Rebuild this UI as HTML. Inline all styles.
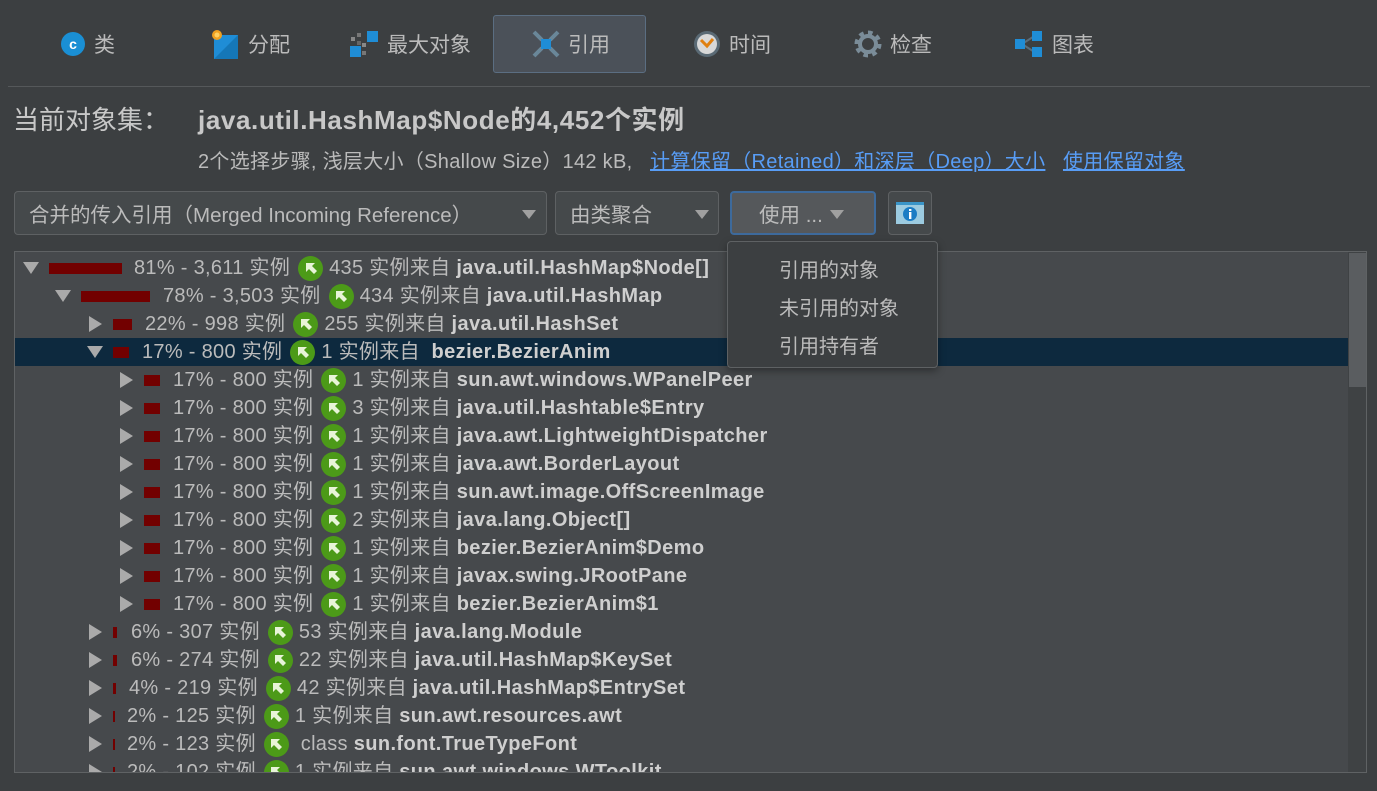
<!DOCTYPE html>
<html><head><meta charset="utf-8"><style>
*{margin:0;padding:0;box-sizing:border-box}
body{width:1377px;height:791px;background:#3c3f41;color:#bbbbbb;font-family:"Liberation Sans","Noto Sans CJK SC",sans-serif;position:relative;overflow:hidden;font-size:18px}
.abs{position:absolute}
.tab{position:absolute;top:15px;height:58px;display:flex;align-items:center;font-size:21px;color:#bbb}
.tab svg{margin-right:8px}
.sel{background:#4b5159;border:1px solid #5b6e82;border-radius:3px}
a{color:#589df6;text-decoration:underline}
.combo{position:absolute;top:191px;height:44px;background:#45494b;border:1px solid #5e6163;border-radius:4px;display:flex;align-items:center;padding-left:14px;font-size:20.5px;white-space:nowrap}
.tri{position:absolute;width:0;height:0;border-left:7px solid transparent;border-right:7px solid transparent;border-top:9px solid #a0a0a0}
.tree{position:absolute;left:14px;top:251px;width:1353px;height:522px;background:#46494c;border:1px solid #5f6264;overflow:hidden}
.row{position:absolute;left:0;width:1333px;height:28px;white-space:nowrap}
.row.s{background:#0d293e}
.ar{position:absolute;top:8px}
.ar.o{width:0;height:0;border-left:8px solid transparent;border-right:8px solid transparent;border-top:12px solid #aaa}
.ar.c{width:0;height:0;border-top:8px solid transparent;border-bottom:8px solid transparent;border-left:13px solid #aaa;top:6px}
.bar{position:absolute;top:9px;height:11px;background:#720000}
.tx{position:absolute;top:1px;display:flex;align-items:center;line-height:26px;font-size:20px;letter-spacing:0.3px}
.gi{width:25px;height:25px;border-radius:50%;background:#4c9a18;margin:0 6px 0 8px;display:inline-flex;align-items:center;justify-content:center}
b{color:#cfcfcf;letter-spacing:0.4px}
</style></head><body>
<div class="tab" style="left:60px"><svg width="26" height="26"><circle cx="13" cy="13" r="12" fill="#1a8fd4"/><text x="13" y="18" font-size="14" font-weight="bold" fill="#fff" text-anchor="middle" font-family="Liberation Sans">c</text></svg>类</div>
<div class="tab" style="left:210px"><svg width="30" height="30"><rect x="4" y="6" width="24" height="24" fill="#1f8dd6"/><path d="M4 30 L28 6 L28 30Z" fill="#1577b8"/><circle cx="7" cy="6" r="5" fill="#f0a020"/><circle cx="7" cy="6" r="2.5" fill="#ffd060"/></svg>分配</div>
<div class="tab" style="left:349px"><svg width="30" height="30"><rect x="18" y="2" width="11" height="11" fill="#1f8dd6"/><rect x="1" y="17" width="11" height="11" fill="#1f8dd6"/><rect x="2" y="8" width="4" height="4" fill="#888"/><rect x="8" y="4" width="4" height="4" fill="#777"/><rect x="13" y="14" width="4" height="4" fill="#888"/><rect x="13" y="22" width="4" height="4" fill="#777"/><rect x="8" y="12" width="4" height="4" fill="#666"/></svg>最大对象</div>
<div class="tab sel" style="left:493px;width:153px;padding-left:38px"><svg width="28" height="28"><path d="M2 2 L10 10 M26 2 L18 10 M2 26 L10 18 M26 26 L18 18" stroke="#6a8799" stroke-width="4"/><rect x="9" y="9" width="10" height="10" fill="#1f8dd6"/></svg>引用</div>
<div class="tab" style="left:693px"><svg width="28" height="28"><circle cx="14" cy="14" r="13" fill="#5a6a75"/><circle cx="14" cy="14" r="10" fill="#d8d8d8"/><path d="M8 10 L14 16 L20 9" stroke="#e08010" stroke-width="3" fill="none"/></svg>时间</div>
<div class="tab" style="left:854px"><svg width="28" height="28"><circle cx="14" cy="14" r="10" fill="none" stroke="#7a8c98" stroke-width="7" stroke-dasharray="4 3.8"/><circle cx="14" cy="14" r="8" fill="none" stroke="#7a8c98" stroke-width="4"/></svg>检查</div>
<div class="tab" style="left:1014px"><svg width="30" height="28"><path d="M8 14 L22 5 M8 14 L22 23" stroke="#5b6d7a" stroke-width="2"/><rect x="1" y="9" width="10" height="10" fill="#1f8dd6"/><rect x="18" y="1" width="10" height="10" fill="#1f8dd6"/><rect x="18" y="17" width="10" height="10" fill="#1f8dd6"/></svg>图表</div>
<div class="abs" style="left:8px;top:86px;width:1362px;height:1px;background:#55585a"></div>
<div class="abs" style="left:13px;top:100px;font-size:26px;color:#c8c8c8">当前对象集：</div>
<div class="abs" style="left:198px;top:100px;font-size:26px;font-weight:bold;color:#c8c8c8;letter-spacing:0.6px">java.util.HashMap$Node的4,452个实例</div>
<div class="abs" style="left:198px;top:145px;font-size:20px;letter-spacing:0.3px;white-space:nowrap">2个选择步骤, 浅层大小（Shallow Size）142 kB,&nbsp;&nbsp; <a>计算保留（Retained）和深层（Deep）大小</a>&nbsp;&nbsp; <a>使用保留对象</a></div>
<div class="combo" style="left:14px;width:533px">合并的传入引用（Merged Incoming Reference）<div class="tri" style="left:507px;top:18px"></div></div>
<div class="combo" style="left:555px;width:164px">由类聚合<div class="tri" style="left:139px;top:18px"></div></div>
<div class="combo" style="left:730px;width:146px;background:#55585b;border:2px solid #3d6a9c;padding-left:27px">使用 ...<div class="tri" style="left:98px;top:17px"></div></div>
<div class="combo" style="left:888px;width:44px;padding:0;justify-content:center"><svg width="30" height="24"><rect x="1" y="1" width="28" height="22" fill="#9ccbe0"/><rect x="1" y="1" width="28" height="3" fill="#3a95c8"/><circle cx="15" cy="13" r="7" fill="#1a7cc4"/><rect x="14" y="11" width="2.4" height="7" fill="#fff"/><rect x="14" y="8" width="2.4" height="2" fill="#fff"/></svg></div>
<div class="tree">
<div class="abs" style="left:1333px;top:0;width:19px;height:520px;background:#3f4244"></div>
<div class="abs" style="left:1334px;top:1px;width:17px;height:134px;background:#5a5d60"></div>
<div class="row" style="top:2px"><div class="ar o" style="left:8px"></div><div class="bar" style="left:34px;width:73px"></div><div class="tx" style="left:119px">81% - 3,611 实例<span class="gi"><svg width="14" height="14"><path d="M2 2 L11 2 L8 5 L13 10 L10 13 L5 8 L2 11Z" fill="#e8f4d8"/></svg></span>435 实例来自&nbsp;<b>java.util.HashMap$Node[]</b></div></div>
<div class="row" style="top:30px"><div class="ar o" style="left:40px"></div><div class="bar" style="left:66px;width:69px"></div><div class="tx" style="left:148px">78% - 3,503 实例<span class="gi"><svg width="14" height="14"><path d="M2 2 L11 2 L8 5 L13 10 L10 13 L5 8 L2 11Z" fill="#e8f4d8"/></svg></span>434 实例来自&nbsp;<b>java.util.HashMap</b></div></div>
<div class="row" style="top:58px"><div class="ar c" style="left:74px"></div><div class="bar" style="left:98px;width:19px"></div><div class="tx" style="left:130px">22% - 998 实例<span class="gi"><svg width="14" height="14"><path d="M2 2 L11 2 L8 5 L13 10 L10 13 L5 8 L2 11Z" fill="#e8f4d8"/></svg></span>255 实例来自&nbsp;<b>java.util.HashSet</b></div></div>
<div class="row s" style="top:86px"><div class="ar o" style="left:72px"></div><div class="bar" style="left:98px;width:16px"></div><div class="tx" style="left:127px">17% - 800 实例<span class="gi"><svg width="14" height="14"><path d="M2 2 L11 2 L8 5 L13 10 L10 13 L5 8 L2 11Z" fill="#e8f4d8"/></svg></span>1 实例来自&nbsp;&nbsp;<b>bezier.BezierAnim</b></div></div>
<div class="row" style="top:114px"><div class="ar c" style="left:105px"></div><div class="bar" style="left:129px;width:16px"></div><div class="tx" style="left:158px">17% - 800 实例<span class="gi"><svg width="14" height="14"><path d="M2 2 L11 2 L8 5 L13 10 L10 13 L5 8 L2 11Z" fill="#e8f4d8"/></svg></span>1 实例来自&nbsp;<b>sun.awt.windows.WPanelPeer</b></div></div>
<div class="row" style="top:142px"><div class="ar c" style="left:105px"></div><div class="bar" style="left:129px;width:16px"></div><div class="tx" style="left:158px">17% - 800 实例<span class="gi"><svg width="14" height="14"><path d="M2 2 L11 2 L8 5 L13 10 L10 13 L5 8 L2 11Z" fill="#e8f4d8"/></svg></span>3 实例来自&nbsp;<b>java.util.Hashtable$Entry</b></div></div>
<div class="row" style="top:170px"><div class="ar c" style="left:105px"></div><div class="bar" style="left:129px;width:16px"></div><div class="tx" style="left:158px">17% - 800 实例<span class="gi"><svg width="14" height="14"><path d="M2 2 L11 2 L8 5 L13 10 L10 13 L5 8 L2 11Z" fill="#e8f4d8"/></svg></span>1 实例来自&nbsp;<b>java.awt.LightweightDispatcher</b></div></div>
<div class="row" style="top:198px"><div class="ar c" style="left:105px"></div><div class="bar" style="left:129px;width:16px"></div><div class="tx" style="left:158px">17% - 800 实例<span class="gi"><svg width="14" height="14"><path d="M2 2 L11 2 L8 5 L13 10 L10 13 L5 8 L2 11Z" fill="#e8f4d8"/></svg></span>1 实例来自&nbsp;<b>java.awt.BorderLayout</b></div></div>
<div class="row" style="top:226px"><div class="ar c" style="left:105px"></div><div class="bar" style="left:129px;width:16px"></div><div class="tx" style="left:158px">17% - 800 实例<span class="gi"><svg width="14" height="14"><path d="M2 2 L11 2 L8 5 L13 10 L10 13 L5 8 L2 11Z" fill="#e8f4d8"/></svg></span>1 实例来自&nbsp;<b>sun.awt.image.OffScreenImage</b></div></div>
<div class="row" style="top:254px"><div class="ar c" style="left:105px"></div><div class="bar" style="left:129px;width:16px"></div><div class="tx" style="left:158px">17% - 800 实例<span class="gi"><svg width="14" height="14"><path d="M2 2 L11 2 L8 5 L13 10 L10 13 L5 8 L2 11Z" fill="#e8f4d8"/></svg></span>2 实例来自&nbsp;<b>java.lang.Object[]</b></div></div>
<div class="row" style="top:282px"><div class="ar c" style="left:105px"></div><div class="bar" style="left:129px;width:16px"></div><div class="tx" style="left:158px">17% - 800 实例<span class="gi"><svg width="14" height="14"><path d="M2 2 L11 2 L8 5 L13 10 L10 13 L5 8 L2 11Z" fill="#e8f4d8"/></svg></span>1 实例来自&nbsp;<b>bezier.BezierAnim$Demo</b></div></div>
<div class="row" style="top:310px"><div class="ar c" style="left:105px"></div><div class="bar" style="left:129px;width:16px"></div><div class="tx" style="left:158px">17% - 800 实例<span class="gi"><svg width="14" height="14"><path d="M2 2 L11 2 L8 5 L13 10 L10 13 L5 8 L2 11Z" fill="#e8f4d8"/></svg></span>1 实例来自&nbsp;<b>javax.swing.JRootPane</b></div></div>
<div class="row" style="top:338px"><div class="ar c" style="left:105px"></div><div class="bar" style="left:129px;width:16px"></div><div class="tx" style="left:158px">17% - 800 实例<span class="gi"><svg width="14" height="14"><path d="M2 2 L11 2 L8 5 L13 10 L10 13 L5 8 L2 11Z" fill="#e8f4d8"/></svg></span>1 实例来自&nbsp;<b>bezier.BezierAnim$1</b></div></div>
<div class="row" style="top:366px"><div class="ar c" style="left:74px"></div><div class="bar" style="left:98px;width:4px"></div><div class="tx" style="left:116px">6% - 307 实例<span class="gi"><svg width="14" height="14"><path d="M2 2 L11 2 L8 5 L13 10 L10 13 L5 8 L2 11Z" fill="#e8f4d8"/></svg></span>53 实例来自&nbsp;<b>java.lang.Module</b></div></div>
<div class="row" style="top:394px"><div class="ar c" style="left:74px"></div><div class="bar" style="left:98px;width:4px"></div><div class="tx" style="left:116px">6% - 274 实例<span class="gi"><svg width="14" height="14"><path d="M2 2 L11 2 L8 5 L13 10 L10 13 L5 8 L2 11Z" fill="#e8f4d8"/></svg></span>22 实例来自&nbsp;<b>java.util.HashMap$KeySet</b></div></div>
<div class="row" style="top:422px"><div class="ar c" style="left:74px"></div><div class="bar" style="left:98px;width:3px"></div><div class="tx" style="left:114px">4% - 219 实例<span class="gi"><svg width="14" height="14"><path d="M2 2 L11 2 L8 5 L13 10 L10 13 L5 8 L2 11Z" fill="#e8f4d8"/></svg></span>42 实例来自&nbsp;<b>java.util.HashMap$EntrySet</b></div></div>
<div class="row" style="top:450px"><div class="ar c" style="left:74px"></div><div class="bar" style="left:98px;width:2px"></div><div class="tx" style="left:112px">2% - 125 实例<span class="gi"><svg width="14" height="14"><path d="M2 2 L11 2 L8 5 L13 10 L10 13 L5 8 L2 11Z" fill="#e8f4d8"/></svg></span>1 实例来自&nbsp;<b>sun.awt.resources.awt</b></div></div>
<div class="row" style="top:478px"><div class="ar c" style="left:74px"></div><div class="bar" style="left:98px;width:2px"></div><div class="tx" style="left:112px">2% - 123 实例<span class="gi"><svg width="14" height="14"><path d="M2 2 L11 2 L8 5 L13 10 L10 13 L5 8 L2 11Z" fill="#e8f4d8"/></svg></span>&nbsp;class&nbsp;<b>sun.font.TrueTypeFont</b></div></div>
<div class="row" style="top:506px"><div class="ar c" style="left:74px"></div><div class="bar" style="left:98px;width:2px"></div><div class="tx" style="left:112px">2% - 102 实例<span class="gi"><svg width="14" height="14"><path d="M2 2 L11 2 L8 5 L13 10 L10 13 L5 8 L2 11Z" fill="#e8f4d8"/></svg></span>1 实例来自&nbsp;<b>sun.awt.windows.WToolkit</b></div></div>
</div>
<div class="abs" style="left:727px;top:241px;width:211px;height:127px;background:#3c3f41;border:1px solid #5e6163;border-radius:4px;box-shadow:0 3px 8px rgba(0,0,0,.35);font-size:20px">
<div class="abs" style="left:51px;top:12px">引用的对象</div>
<div class="abs" style="left:51px;top:50px">未引用的对象</div>
<div class="abs" style="left:51px;top:88px">引用持有者</div>
</div>
</body></html>
